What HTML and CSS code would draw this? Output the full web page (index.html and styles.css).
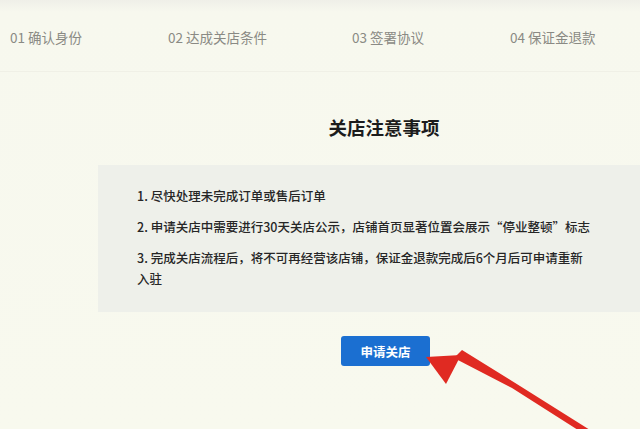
FILE: index.html
```html
<!DOCTYPE html>
<html lang="zh">
<head>
<meta charset="utf-8">
<link rel="stylesheet" href="styles.css">
</head>
<body>
<div class="page">
  <div class="steps">
    <div class="step s1">01 确认身份</div>
    <div class="step s2">02 达成关店条件</div>
    <div class="step s3">03 签署协议</div>
    <div class="step s4">04 保证金退款</div>
  </div>
  <div class="content">
    <h1 class="title">关店注意事项</h1>
    <div class="notice">
      <p class="item">1. 尽快处理未完成订单或售后订单</p>
      <p class="item">2. 申请关店中需要进行30天关店公示，店铺首页显著位置会展示“停业整顿”标志</p>
      <p class="item">3. 完成关店流程后，将不可再经营该店铺，保证金退款完成后6个月后可申请重新入驻</p>
    </div>
    <div class="actions">
      <button class="btn">申请关店</button>
    </div>
  </div>
  <svg class="arrow" width="220" height="90" viewBox="0 0 220 90">
    <path d="M34 18 L92 48 L158 90 L170 90 L100 46 L42 10 Z" fill="#e02a22"/>
    <path d="M6 17 L41 15 L26 44 Z" fill="#e02a22"/>
  </svg>
</div>
</body>
</html>
```
FILE: styles.css
```css
html, body { margin: 0; padding: 0; }
body {
  background: #f8f9ee;
  font-family: "Noto Sans CJK SC", "Liberation Sans", sans-serif;
  width: 640px;
  height: 429px;
  overflow: hidden;
}
.page {
  position: relative;
  width: 640px;
  height: 429px;
  background: linear-gradient(#efefe8 0, #f7f8ee 12px, #f8f9ee 100%);
}
.steps {
  display: flex;
  align-items: center;
  height: 72px;
  padding-left: 10px;
  border-bottom: 1px solid #f0f0e6;
  box-sizing: border-box;
  padding-top: 2px;
}
.step {
  font-size: 13.5px;
  color: #8a8a84;
  white-space: nowrap;
}
.s1 { width: 158px; }
.s2 { width: 184px; }
.s3 { width: 158px; }
.content {
  display: flex;
  flex-direction: column;
  align-items: stretch;
  padding-left: 98px;
}
.title {
  margin: 43px 0 0 0;
  text-align: center;
  font-size: 18.5px;
  font-weight: 700;
  color: #1c1c1c;
  line-height: 24px;
  padding-left: 30px;
  width: 512px;
}
.notice {
  margin-top: 26px;
  background: #eef0ea;
  height: 147px;
  box-sizing: border-box;
  padding: 20px 0 0 39px;
}
.item {
  margin: 0 0 10px 0;
  font-size: 12.5px;
  font-weight: 500;
  line-height: 21px;
  color: #262626;
  width: 455px;
}
.actions {
  margin-top: 24px;
  padding-left: 243px;
}
.btn {
  width: 89px;
  height: 30px;
  border: none;
  border-radius: 3px;
  background: #1b6fd1;
  color: #ffffff;
  font-family: "Noto Sans CJK SC", sans-serif;
  font-size: 12.5px;
  font-weight: 700;
  padding: 0;
}
.arrow {
  position: absolute;
  left: 420px;
  top: 340px;
}
```
